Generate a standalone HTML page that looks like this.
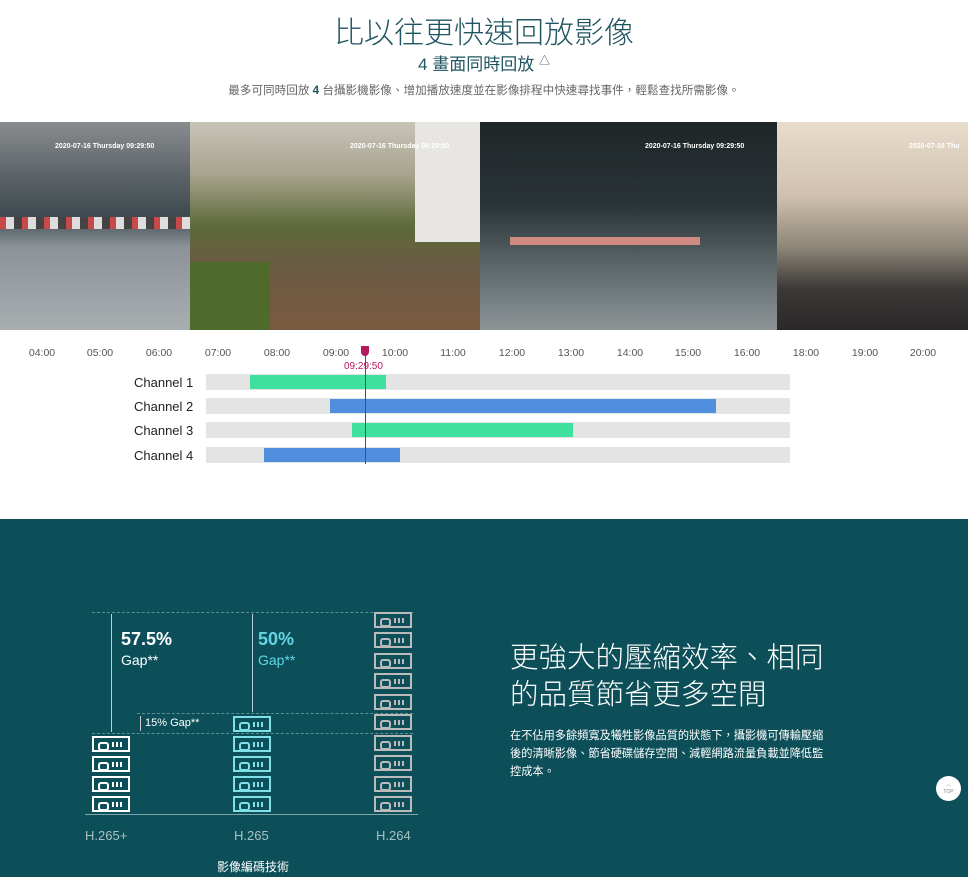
<!DOCTYPE html><html><head><meta charset="utf-8"><style>
*{margin:0;padding:0;box-sizing:border-box}
body{width:968px;height:877px;overflow:hidden;background:#fff;font-family:"Liberation Sans","Noto Sans CJK TC",sans-serif;position:relative}
.a{position:absolute}
.t{white-space:nowrap}
.img{position:absolute;top:122px;height:208px;overflow:hidden}
.ts{position:absolute;top:21px;color:#fff;font-size:7px;font-weight:bold}
.tl{position:absolute;top:347px;font-size:10.5px;color:#555;transform:translateX(-50%)}
.row{position:absolute;left:206px;width:584px;height:16px;background:#e4e4e4}
.lab{position:absolute;left:134px;font-size:13px;color:#222}
.bar{position:absolute;height:14px}
.sv{position:absolute;width:38px;height:16px;border:2px solid #fff}
.sv:before{content:"";position:absolute;left:4px;top:4px;width:7px;height:5px;border:2px solid;border-radius:3px}
.sv:after{content:"";position:absolute;left:18px;top:4px;width:10px;height:5px;background:repeating-linear-gradient(90deg,currentColor 0 2px,transparent 2px 4px)}
</style></head><body>
<div class="a t" style="left:0;width:968px;top:8px;text-align:center;font-size:30px;color:#1f5560;font-weight:300">比以往更快速回放影像</div>
<div class="a t" style="left:0;width:968px;top:50px;text-align:center;font-size:17px;color:#1f5560">4 畫面同時回放 <span style="font-size:11px;vertical-align:6px">△</span></div>
<div class="a t" style="left:0;width:968px;top:82px;text-align:center;font-size:11.6px;color:#666">最多可同時回放 <b style="color:#1f5560">4</b> 台攝影機影像、增加播放速度並在影像排程中快速尋找事件，輕鬆查找所需影像。</div>

<div class="img" style="left:0;width:190px;background:linear-gradient(180deg,#8a8d90 0%,#5d6468 25%,#3e4a50 45%,#8c9398 60%,#a8adb0 100%)"><div class="a" style="left:0;top:95px;width:190px;height:12px;background:repeating-linear-gradient(90deg,#c7494a 0 6px,#ddd 6px 14px,#444 14px 22px)"></div><div class="ts" style="left:55px">2020-07-16 Thursday 09:29:50</div></div>
<div class="img" style="left:190px;width:290px;background:linear-gradient(180deg,#c8c4b8 0%,#a8a48e 25%,#5d6a3a 50%,#6b5a44 70%,#7a5a40 100%)"><div class="a" style="left:225px;top:0;width:65px;height:120px;background:#e8e6e2"></div><div class="a" style="left:0;top:140px;width:80px;height:70px;background:#4e6b2c"></div><div class="ts" style="left:160px">2020-07-16 Thursday 09:29:50</div></div>
<div class="img" style="left:480px;width:297px;background:linear-gradient(180deg,#1e2628 0%,#2a3336 40%,#556063 65%,#8d9597 100%)"><div class="a" style="left:30px;top:115px;width:190px;height:8px;background:#d08a80"></div><div class="ts" style="left:165px">2020-07-16 Thursday 09:29:50</div></div>
<div class="img" style="left:777px;width:191px;background:linear-gradient(180deg,#e8dccc 0%,#d0c2ae 35%,#8e8678 60%,#3c3a38 80%,#2a2828 100%)"><div class="ts" style="left:132px">2020-07-16 Thu</div></div>

<div class="tl" style="left:42px">04:00</div><div class="tl" style="left:100px">05:00</div><div class="tl" style="left:159px">06:00</div><div class="tl" style="left:218px">07:00</div><div class="tl" style="left:277px">08:00</div><div class="tl" style="left:336px">09:00</div><div class="tl" style="left:395px">10:00</div><div class="tl" style="left:453px">11:00</div><div class="tl" style="left:512px">12:00</div><div class="tl" style="left:571px">13:00</div><div class="tl" style="left:630px">14:00</div><div class="tl" style="left:688px">15:00</div><div class="tl" style="left:747px">16:00</div><div class="tl" style="left:806px">18:00</div><div class="tl" style="left:865px">19:00</div><div class="tl" style="left:923px">20:00</div>
<div class="a t" style="left:344px;top:361px;font-size:10px;color:#b5195e">09:29:50</div>
<div class="lab" style="top:375px">Channel 1</div><div class="row" style="top:374px"></div><div class="bar" style="left:250px;top:375px;width:136px;background:#3fdf9e"></div>
<div class="lab" style="top:399px">Channel 2</div><div class="row" style="top:398px"></div><div class="bar" style="left:330px;top:399px;width:386px;background:#4f8fdd"></div>
<div class="lab" style="top:423px">Channel 3</div><div class="row" style="top:422px"></div><div class="bar" style="left:352px;top:423px;width:221px;background:#3fdf9e"></div>
<div class="lab" style="top:448px">Channel 4</div><div class="row" style="top:447px"></div><div class="bar" style="left:264px;top:448px;width:136px;background:#4f8fdd"></div>
<div class="a" style="left:365px;top:352px;width:1px;height:112px;background:#b5195e"></div>
<div class="a" style="left:361px;top:346px;width:8px;height:10px;background:#b5195e;border-radius:0 0 4px 4px"></div>

<div class="a" style="left:0;top:519px;width:968px;height:358px;background:#0c4f59"></div>
<div class="a" style="left:92px;top:612px;width:321px;border-top:1px dashed #5f8e94"></div>
<div class="a" style="left:137px;top:713px;width:276px;border-top:1px dashed #5f8e94"></div>
<div class="a" style="left:92px;top:733px;width:321px;border-top:1px dashed #5f8e94"></div>
<div class="a" style="left:85px;top:814px;width:333px;height:1px;background:#7fa6ab"></div>
<div class="a" style="left:111px;top:614px;width:1px;height:118px;background:#bcd"></div>
<div class="a" style="left:252px;top:614px;width:1px;height:98px;background:#bcd"></div>
<div class="a" style="left:140px;top:716px;width:1px;height:15px;background:#ccc"></div>
<div class="a t" style="left:121px;top:629px;font-size:18px;font-weight:bold;color:#fff">57.5%</div>
<div class="a t" style="left:121px;top:652px;font-size:14px;color:#fff">Gap**</div>
<div class="a t" style="left:258px;top:629px;font-size:18px;font-weight:bold;color:#63d6e6">50%</div>
<div class="a t" style="left:258px;top:652px;font-size:14px;color:#63d6e6">Gap**</div>
<div class="a t" style="left:145px;top:717px;font-size:11px;color:#fff">15% Gap**</div>

<div class="sv" style="left:92px;top:736px;color:#fff"></div><div class="sv" style="left:92px;top:756px;color:#fff"></div><div class="sv" style="left:92px;top:776px;color:#fff"></div><div class="sv" style="left:92px;top:796px;color:#fff"></div>
<div class="sv" style="left:233px;top:716px;color:#7fe0ea;border-color:#7fe0ea"></div><div class="sv" style="left:233px;top:736px;color:#7fe0ea;border-color:#7fe0ea"></div><div class="sv" style="left:233px;top:756px;color:#7fe0ea;border-color:#7fe0ea"></div><div class="sv" style="left:233px;top:776px;color:#7fe0ea;border-color:#7fe0ea"></div><div class="sv" style="left:233px;top:796px;color:#7fe0ea;border-color:#7fe0ea"></div>
<div class="sv" style="left:374px;top:612px;color:#bbb;border-color:#bbb"></div><div class="sv" style="left:374px;top:632px;color:#bbb;border-color:#bbb"></div><div class="sv" style="left:374px;top:653px;color:#bbb;border-color:#bbb"></div><div class="sv" style="left:374px;top:673px;color:#bbb;border-color:#bbb"></div><div class="sv" style="left:374px;top:694px;color:#bbb;border-color:#bbb"></div><div class="sv" style="left:374px;top:714px;color:#bbb;border-color:#bbb"></div><div class="sv" style="left:374px;top:735px;color:#bbb;border-color:#bbb"></div><div class="sv" style="left:374px;top:755px;color:#bbb;border-color:#bbb"></div><div class="sv" style="left:374px;top:776px;color:#bbb;border-color:#bbb"></div><div class="sv" style="left:374px;top:796px;color:#bbb;border-color:#bbb"></div>
<div class="a t" style="left:85px;top:828px;font-size:13px;color:#a9c0c3">H.265+</div>
<div class="a t" style="left:234px;top:828px;font-size:13px;color:#a9c0c3">H.265</div>
<div class="a t" style="left:376px;top:828px;font-size:13px;color:#a9c0c3">H.264</div>
<div class="a t" style="left:217px;top:858px;font-size:12px;color:#fff">影像編碼技術</div>

<div class="a t" style="left:510px;top:640px;font-size:28.5px;line-height:37px;color:#fff;font-weight:300">更強大的壓縮效率、相同<br>的品質節省更多空間</div>
<div class="a t" style="left:510px;top:727px;font-size:11.2px;line-height:18px;color:#fff">在不佔用多餘頻寬及犧牲影像品質的狀態下，攝影機可傳輸壓縮<br>後的清晰影像、節省硬碟儲存空間、減輕網路流量負載並降低監<br>控成本。</div>
<div class="a" style="left:936px;top:776px;width:25px;height:25px;border-radius:50%;background:#fff;color:#888;font-size:5px;text-align:center;line-height:7px;padding-top:6px">︿<br>TOP</div>
</body></html>
